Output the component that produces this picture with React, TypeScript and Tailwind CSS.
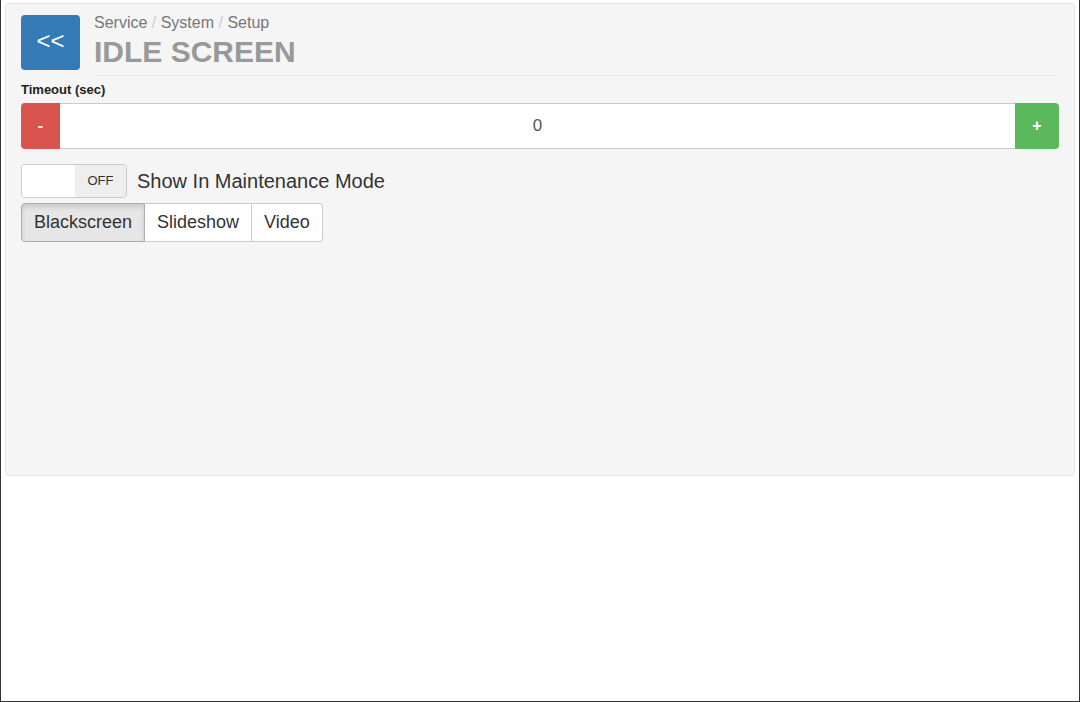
const App = () => {
  return (
    <div
      className="h-[702px] w-[1080px] bg-white border-x border-b border-[#333] pt-[3px] px-[4px]"
      style={{ fontFamily: '"Liberation Sans", Arial, sans-serif' }}
    >
      <div className="h-[473px] bg-[#f5f5f5] border border-[#e3e3e3] rounded px-[15px] pt-[11px]">
        {/* header */}
        <div className="flex gap-[14px]">
          <button className="w-[59px] h-[55px] bg-[#337ab7] rounded text-white text-[24px] leading-none pb-1">
            &lt;&lt;
          </button>
          <div className="flex flex-col flex-1">
            <div className="text-[16px] text-[#777] leading-[20px] mt-[-2px]">
              Service <span className="text-[#ccc]">/</span> System{' '}
              <span className="text-[#ccc]">/</span> Setup
            </div>
            <div className="text-[30px] font-bold text-[#999] leading-[36px] mt-[1px]">IDLE SCREEN</div>
            <div className="border-t border-[#e8e8e8] mt-[5px] mr-[2px]" />
          </div>
        </div>

        <div className="text-[13px] font-bold text-[#222] mt-[6px] mb-[6px] leading-[15px]">Timeout (sec)</div>
        <div className="flex h-[46px]">
          <button className="w-[39px] bg-[#d9534f] text-white font-bold text-[16px] rounded-l">-</button>
          <div className="flex-1 bg-white border-y border-[#ccc] flex items-center justify-center text-[17px] text-[#555]">
            0
          </div>
          <button className="w-[44px] bg-[#5cb85c] text-white font-bold text-[16px] rounded-r">+</button>
        </div>

        <div className="flex items-center mt-[15px] gap-[10px]">
          <div className="flex w-[106px] h-[34px] border border-[#ccc] rounded overflow-hidden">
            <div className="w-[53px] bg-white" />
            <div className="flex-1 bg-[#eee] flex items-center justify-center text-[13px] text-[#333]">OFF</div>
          </div>
          <span className="text-[20px] text-[#333]">Show In Maintenance Mode</span>
        </div>

        <div className="flex mt-[5px] h-[39px] text-[18px] text-[#333]">
          <button className="px-[12px] bg-[#e6e6e6] border border-[#adadad] rounded-l shadow-[inset_0_3px_5px_rgba(0,0,0,0.125)]">
            Blackscreen
          </button>
          <button className="px-[12px] bg-white border-y border-r border-[#ccc]">Slideshow</button>
          <button className="px-[12px] bg-white border-y border-r border-[#ccc] rounded-r">Video</button>
        </div>
      </div>
    </div>
  );
};

export default App;
